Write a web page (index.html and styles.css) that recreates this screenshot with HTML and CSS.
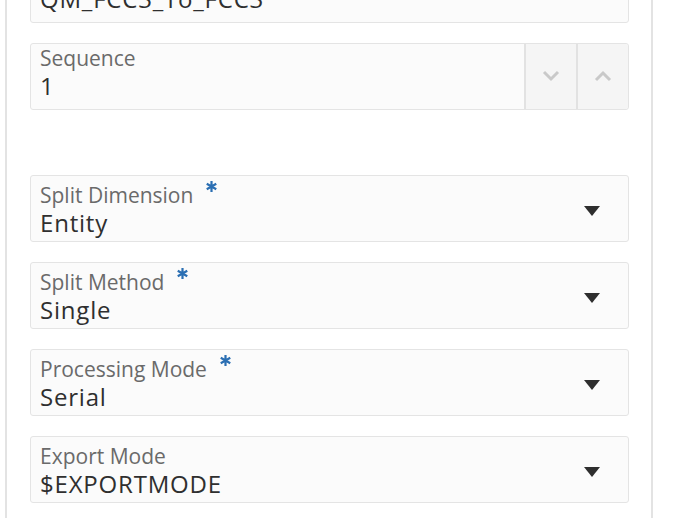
FILE: index.html
```html
<!DOCTYPE html>
<html lang="en">
<head>
  <meta charset="UTF-8">
  <title>Split settings</title>
  <link rel="stylesheet" href="styles.css">
</head>
<body>
  <div class="panel">
    <div class="field field-first">
      <div class="field-text">
        <span class="label">Target</span>
        <span class="value">QM_FCC3_To_FCC3</span>
      </div>
    </div>

    <div class="field field-spin">
      <div class="field-text">
        <span class="label">Sequence</span>
        <span class="value">1</span>
      </div>
      <button class="spin-btn">
        <svg width="18" height="12" viewBox="0 0 18 12"><path d="M2 2 L9 9 L16 2" fill="none" stroke="#c9c9c9" stroke-width="3"/></svg>
      </button>
      <button class="spin-btn">
        <svg width="18" height="12" viewBox="0 0 18 12"><path d="M2 10 L9 3 L16 10" fill="none" stroke="#c9c9c9" stroke-width="3"/></svg>
      </button>
    </div>

    <div class="spacer"></div>

    <div class="field field-select">
      <div class="field-text">
        <span class="label">Split Dimension <svg class="req" width="11" height="11" viewBox="0 0 12 12"><path d="M6 0 V12 M0.8 3 L11.2 9 M0.8 9 L11.2 3" stroke="#2b6fb3" stroke-width="2.4"/></svg></span>
        <span class="value">Entity</span>
      </div>
      <span class="caret"></span>
    </div>

    <div class="field field-select">
      <div class="field-text">
        <span class="label">Split Method <svg class="req" width="11" height="11" viewBox="0 0 12 12"><path d="M6 0 V12 M0.8 3 L11.2 9 M0.8 9 L11.2 3" stroke="#2b6fb3" stroke-width="2.4"/></svg></span>
        <span class="value">Single</span>
      </div>
      <span class="caret"></span>
    </div>

    <div class="field field-select">
      <div class="field-text">
        <span class="label">Processing Mode <svg class="req" width="11" height="11" viewBox="0 0 12 12"><path d="M6 0 V12 M0.8 3 L11.2 9 M0.8 9 L11.2 3" stroke="#2b6fb3" stroke-width="2.4"/></svg></span>
        <span class="value">Serial</span>
      </div>
      <span class="caret"></span>
    </div>

    <div class="field field-select">
      <div class="field-text">
        <span class="label">Export Mode</span>
        <span class="value">$EXPORTMODE</span>
      </div>
      <span class="caret"></span>
    </div>
  </div>
</body>
</html>
```

FILE: styles.css
```css
* {
  margin: 0;
  padding: 0;
  box-sizing: border-box;
}

body {
  background-color: #ffffff;
  font-family: 'Open Sans', sans-serif;
  color: #2b2b2b;
  overflow: hidden;
}

.panel {
  margin-left: 5px;
  width: 648px;
  height: 518px;
  border-left: 2px solid #e3e3e3;
  border-right: 2px solid #e3e3e3;
  padding: 0 22px 0 23px;
  display: flex;
  flex-direction: column;
  gap: 20px;
}

.field {
  height: 67px;
  flex-shrink: 0;
  background-color: #fbfbfb;
  border: 1px solid #e4e4e4;
  border-radius: 3px;
  display: flex;
  align-items: stretch;
}

.field-first {
  margin-top: -44px;
}

.field-text {
  flex: 1;
  display: flex;
  flex-direction: column;
  padding: 1px 9px 0;
  white-space: nowrap;
}

.label {
  font-size: 21px;
  line-height: 26px;
  color: #6a6a6a;
  display: flex;
  align-items: flex-start;
}

.req {
  margin-left: 13px;
  margin-top: -1px;
}

.value {
  font-size: 24px;
  line-height: 29px;
  letter-spacing: 0.8px;
  color: #2f2f2f;
}

.spin-btn {
  width: 52px;
  border: none;
  border-left: 2px solid #e2e2e2;
  background-color: #f5f5f5;
  display: flex;
  align-items: center;
  justify-content: center;
  padding-bottom: 2px;
}

.spin-btn:last-child {
  border-top-right-radius: 3px;
  border-bottom-right-radius: 3px;
}

.spacer {
  height: 25px;
  flex-shrink: 0;
}

.field-select {
  align-items: center;
}

.caret {
  width: 0;
  height: 0;
  border-left: 8px solid transparent;
  border-right: 8px solid transparent;
  border-top: 10px solid #2e2e2e;
  margin-right: 28px;
  margin-top: 5px;
}
```
